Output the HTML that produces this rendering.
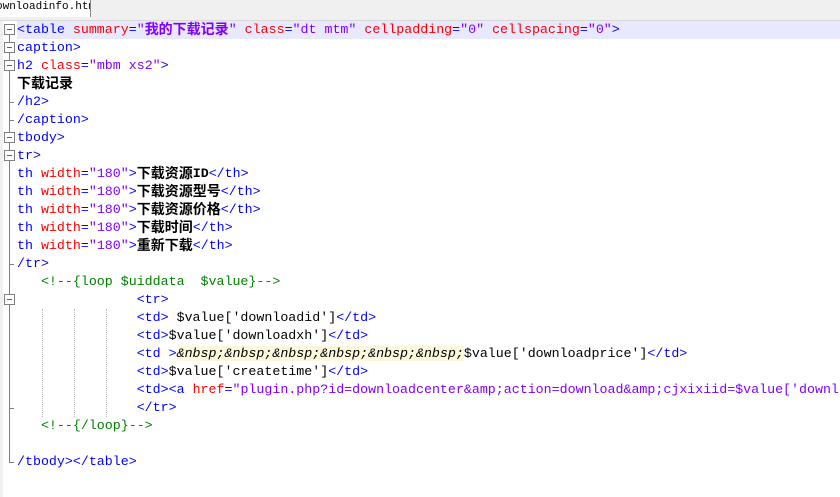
<!DOCTYPE html>
<html><head><meta charset="utf-8"><style>
body{margin:0;width:840px;height:497px;overflow:hidden;background:#fff;position:relative;font-family:"Liberation Mono","Noto Sans CJK SC",monospace;}
.wrap{position:absolute;left:0;top:0;width:840px;height:497px;overflow:hidden}
.top{position:absolute;left:0;top:0;width:840px;height:20px;background:#f0f0f0;border-bottom:1px solid #d8d8d8}
.tab{position:absolute;left:0;top:0;width:90px;height:17px;background:#fff;border-right:1px solid #888;font-size:11px;line-height:15px;color:#000;white-space:nowrap;overflow:hidden}
.tab span{margin-left:-4px}
.strip{position:absolute;left:0;top:21px;width:3px;height:476px;background:#f0f0f0}
.ln{position:absolute;left:17px;height:18px;line-height:18px;font-size:13.3px;white-space:pre;color:#000}
.hl{position:absolute;left:17px;top:21px;width:823px;height:18px;background:#e8e8ff}
.t{color:#0000ff}.a{color:#ff0000}.v{color:#8000ff}.c{color:#008000}.b{font-weight:bold}
.e{font-style:italic;background:#fdf8dc}
.cj{font-family:"Noto Sans CJK SC",sans-serif;font-weight:bold;font-size:14px;line-height:14px;vertical-align:top;position:relative;top:1px}
.box{position:absolute;left:4px;width:11px;height:11px;border:1px solid #808080;background:#fff;box-sizing:border-box}
.box:after{content:"";position:absolute;left:2px;top:4px;width:5px;height:1px;background:#606060}
.vl{position:absolute;left:9px;width:1px;background:#808080}
.hk{position:absolute;left:9px;width:5px;height:1px;background:#808080}
.dot{position:absolute;width:0;border-left:1px dotted #bbb;top:309px;height:108px}
</style></head><body><div class="wrap">
<div class="top"><div class="tab"><span>ownloadinfo.htm</span></div></div>
<div class="strip"></div>
<div class="hl"></div>
<div class="vl" style="top:30px;height:433px"></div>
<div class="hk" style="top:102px"></div><div class="hk" style="top:120px"></div>
<div class="hk" style="top:264px"></div><div class="hk" style="top:408px"></div><div class="hk" style="top:462px"></div>
<div class="box" style="top:24px"></div><div class="box" style="top:42px"></div><div class="box" style="top:60px"></div>
<div class="box" style="top:132px"></div><div class="box" style="top:150px"></div><div class="box" style="top:294px"></div>
<div class="dot" style="left:42px"></div><div class="dot" style="left:74px"></div><div class="dot" style="left:106px"></div>
<div class="ln" style="top:21px"><span class="t">&lt;table </span><span class="a">summary</span><span class="t">=</span><span class="v">"<span class="cj">我的下载记录</span>"</span> <span class="a">class</span><span class="t">=</span><span class="v">"dt mtm"</span> <span class="a">cellpadding</span><span class="t">=</span><span class="v">"0"</span> <span class="a">cellspacing</span><span class="t">=</span><span class="v">"0"</span><span class="t">&gt;</span></div>
<div class="ln t" style="top:39px">caption&gt;</div>
<div class="ln" style="top:57px"><span class="t">h2 </span><span class="a">class</span><span class="t">=</span><span class="v">"mbm xs2"</span><span class="t">&gt;</span></div>
<div class="ln" style="top:75px"><span class="cj">下载记录</span></div>
<div class="ln t" style="top:93px">/h2&gt;</div>
<div class="ln t" style="top:111px">/caption&gt;</div>
<div class="ln t" style="top:129px">tbody&gt;</div>
<div class="ln t" style="top:147px">tr&gt;</div>
<div class="ln" style="top:165px"><span class="t">th </span><span class="a">width</span><span class="t">=</span><span class="v">"180"</span><span class="t">&gt;</span><span class="cj">下载资源</span><span class="b">ID</span><span class="t">&lt;/th&gt;</span></div>
<div class="ln" style="top:183px"><span class="t">th </span><span class="a">width</span><span class="t">=</span><span class="v">"180"</span><span class="t">&gt;</span><span class="cj">下载资源型号</span><span class="t">&lt;/th&gt;</span></div>
<div class="ln" style="top:201px"><span class="t">th </span><span class="a">width</span><span class="t">=</span><span class="v">"180"</span><span class="t">&gt;</span><span class="cj">下载资源价格</span><span class="t">&lt;/th&gt;</span></div>
<div class="ln" style="top:219px"><span class="t">th </span><span class="a">width</span><span class="t">=</span><span class="v">"180"</span><span class="t">&gt;</span><span class="cj">下载时间</span><span class="t">&lt;/th&gt;</span></div>
<div class="ln" style="top:237px"><span class="t">th </span><span class="a">width</span><span class="t">=</span><span class="v">"180"</span><span class="t">&gt;</span><span class="cj">重新下载</span><span class="t">&lt;/th&gt;</span></div>
<div class="ln t" style="top:255px">/tr&gt;</div>
<div class="ln c" style="top:273px">   &lt;!--{loop $uiddata  $value}--&gt;</div>
<div class="ln" style="top:291px"><span class="t">               &lt;tr&gt;</span></div>
<div class="ln" style="top:309px"><span class="t">               &lt;td&gt;</span> $value['downloadid']<span class="t">&lt;/td&gt;</span></div>
<div class="ln" style="top:327px"><span class="t">               &lt;td&gt;</span>$value['downloadxh']<span class="t">&lt;/td&gt;</span></div>
<div class="ln" style="top:345px"><span class="t">               &lt;td &gt;</span><span class="e">&amp;nbsp;&amp;nbsp;&amp;nbsp;&amp;nbsp;&amp;nbsp;&amp;nbsp;</span>$value['downloadprice']<span class="t">&lt;/td&gt;</span></div>
<div class="ln" style="top:363px"><span class="t">               &lt;td&gt;</span>$value['createtime']<span class="t">&lt;/td&gt;</span></div>
<div class="ln" style="top:381px"><span class="t">               &lt;td&gt;&lt;a </span><span class="a">href</span><span class="t">=</span><span class="v">"plugin.php?id=downloadcenter&amp;amp;action=download&amp;amp;cjxixiid=$value['downl</span></div>
<div class="ln t" style="top:399px">               &lt;/tr&gt;</div>
<div class="ln c" style="top:417px">   &lt;!--{/loop}--&gt;</div>
<div class="ln t" style="top:453px">/tbody&gt;&lt;/table&gt;</div>
</div></body></html>
